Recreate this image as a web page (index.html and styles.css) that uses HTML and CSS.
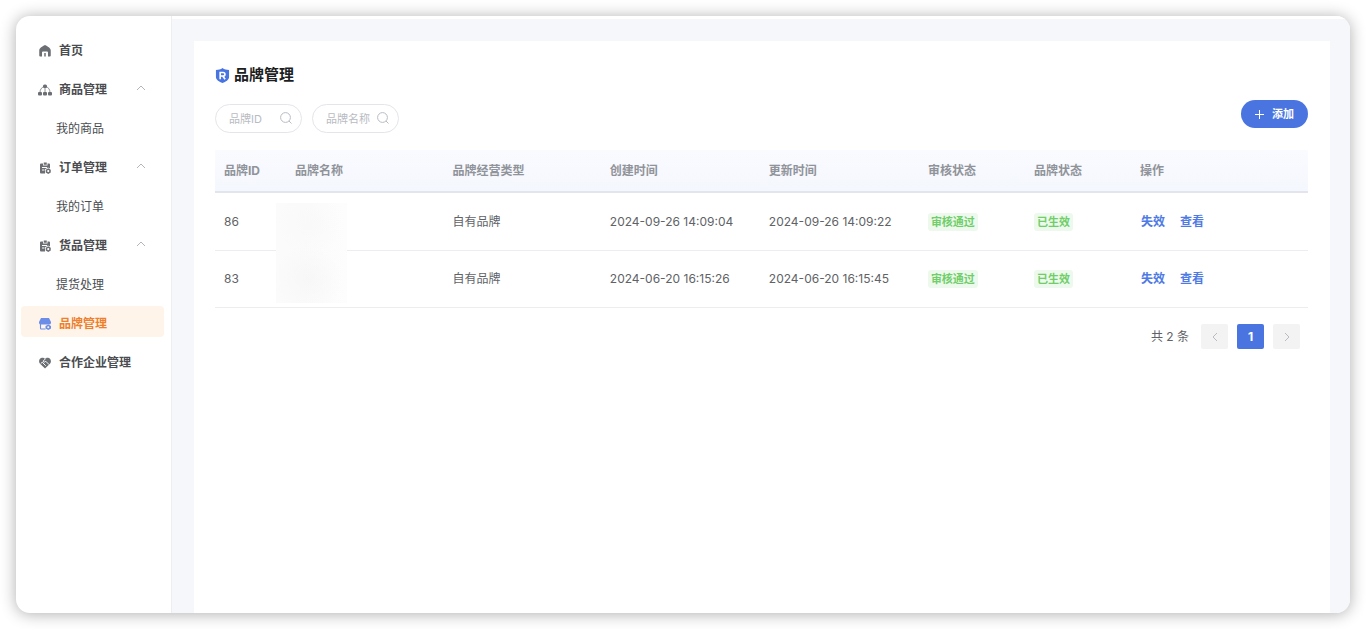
FILE: index.html
```html
<!DOCTYPE html>
<html lang="zh-CN">
<head>
<meta charset="utf-8">
<meta name="viewport" content="width=device-width, initial-scale=1">
<title>品牌管理</title>
<link rel="stylesheet" href="styles.css">
</head>
<body>
<svg class="sprite" aria-hidden="true">
  <symbol id="order" viewBox="0 0 24 24">
    <path fill="currentColor" fill-rule="evenodd" d="M4 3h4v4h9V3h3a2 2 0 0 1 2 2v8l-4-2-6 3.500V23H4a2 2 0 0 1-2-2V5a2 2 0 0 1 2-2zM6 10h10v1.800H6zM6 15h5v1.800H6z"/>
    <path fill="currentColor" d="M9.500 1h6v4.500h-6z"/>
    <path fill="currentColor" fill-rule="evenodd" d="M18.500 12.500l5 2.900v5.700l-5 2.900-5-2.900v-5.700zM18.500 16a2.200 2.200 0 1 0 0 4.400 2.200 2.200 0 0 0 0-4.400z"/>
  </symbol>
  <symbol id="chevron" viewBox="0 0 10 6">
    <path fill="none" stroke="currentColor" d="M1 5l4-4 4 4"/>
  </symbol>
  <symbol id="search" viewBox="0 0 12 12">
    <circle cx="5.500" cy="5.500" r="4.900" fill="none" stroke="currentColor"/>
    <path fill="none" stroke="currentColor" d="M9 9l2.500 2.500"/>
  </symbol>
</svg>
<div class="window">
  <nav class="sidebar">
    <a class="item" href="#">
      <svg class="icon" viewBox="0 0 24 24"><path fill="currentColor" d="M12 0c5 2.500 11.500 6 11.500 11v10a2 2 0 0 1-2 2H18v-8a2 2 0 0 0-2-2H8a2 2 0 0 0-2 2v8H2.500a2 2 0 0 1-2-2V11C.500 6 7 2.500 12 0z"/><path fill="currentColor" d="M10.500 16h3v7h-3z"/></svg>
      首页
    </a>
    <a class="item" href="#">
      <svg class="icon wide" viewBox="0 0 28 24"><path fill="none" stroke="currentColor" stroke-width="1.500" d="M14 5v13M4 17c0-6 3-11 10-12 7 1 10 6 10 12"/><rect x="10" y="1" width="8" height="7" rx="3" fill="currentColor"/><g fill="currentColor"><rect y="16" width="8" height="7" rx="2"/><rect x="10" y="16" width="8" height="7" rx="2"/><rect x="20" y="16" width="8" height="7" rx="2"/></g></svg>
      商品管理
      <svg class="chevron"><use href="#chevron"/></svg>
    </a>
    <a class="item child" href="#">我的商品</a>
    <a class="item" href="#">
      <svg class="icon"><use href="#order"/></svg>
      订单管理
      <svg class="chevron"><use href="#chevron"/></svg>
    </a>
    <a class="item child" href="#">我的订单</a>
    <a class="item" href="#">
      <svg class="icon"><use href="#order"/></svg>
      货品管理
      <svg class="chevron"><use href="#chevron"/></svg>
    </a>
    <a class="item child" href="#">提货处理</a>
    <a class="item active" href="#" aria-current="page">
      <svg class="icon" viewBox="0 0 24 24"><path fill="currentColor" d="M4 0h16l4 8v2a3.900 3.900 0 0 1-4 3H4a3.900 3.900 0 0 1-4-3V8z"/><path fill="none" stroke="currentColor" stroke-width="2.200" d="M3 12v8.500a1.500 1.500 0 0 0 1.500 1.500H13"/><path fill="currentColor" fill-rule="evenodd" d="M18.500 13l5.500 3v5l-5.500 3-5.500-3v-5zM18.500 16.500a2 2 0 1 0 0 4 2 2 0 0 0 0-4z"/></svg>
      品牌管理
    </a>
    <a class="item" href="#">
      <svg class="icon" viewBox="0 0 24 24"><path fill="currentColor" d="M12 23L2 13.500C-1.500 9.500 0 3 5.500 1.500 8 1 10.500 2 12 3.500c1.500-1.500 4-2.500 6.500-2 5.500 1.500 7 8 3.500 12z"/><path fill="none" stroke="#fff" stroke-width="1.900" d="M13 3.500L8.500 8c0 3 3 3 5 .500l7 7M3.500 13l3-2.500 7 7"/></svg>
      合作企业管理
    </a>
  </nav>
  <main class="main">
    <section class="panel">
      <h1 class="title">
        <svg class="shield" viewBox="0 0 14 16"><path fill="#4874e2" d="M7 0c2 1.600 4.300 2 7 2v7.500c0 3-3.500 5.200-7 6.500-3.500-1.300-7-3.500-7-6.500V2c2.700 0 5-.400 7-2z"/><path fill="none" stroke="#fff" stroke-width="1.700" d="M4.500 12V4.800h3.200a1.900 1.900 0 0 1 0 3.800H4.500M7.200 8.600L9.800 12"/></svg>
        品牌管理
      </h1>
      <div class="toolbar">
        <form class="filters">
          <label class="search"><input class="search-input" type="text" placeholder="品牌ID" aria-label="品牌ID"><svg class="search-icon"><use href="#search"/></svg></label>
          <label class="search"><input class="search-input" type="text" placeholder="品牌名称" aria-label="品牌名称"><svg class="search-icon"><use href="#search"/></svg></label>
        </form>
        <button class="add" type="button">
          <svg class="plus" viewBox="0 0 9 9"><path stroke="currentColor" d="M4.500 0v9M0 4.500h9"/></svg>
          添加
        </button>
      </div>
      <div class="table-wrap">
        <table class="table">
          <colgroup>
            <col class="col-id"><col class="col-text"><col class="col-text"><col class="col-time"><col class="col-time"><col class="col-state"><col class="col-state"><col>
          </colgroup>
          <thead>
            <tr><th>品牌ID</th><th>品牌名称</th><th>品牌经营类型</th><th>创建时间</th><th>更新时间</th><th>审核状态</th><th>品牌状态</th><th>操作</th></tr>
          </thead>
          <tbody>
            <tr><td>86</td><td></td><td>自有品牌</td><td>2024-09-26 14:09:04</td><td>2024-09-26 14:09:22</td><td><span class="tag">审核通过</span></td><td><span class="tag">已生效</span></td><td><div class="actions"><a class="link" href="#">失效</a><a class="link" href="#">查看</a></div></td></tr>
            <tr><td>83</td><td></td><td>自有品牌</td><td>2024-06-20 16:15:26</td><td>2024-06-20 16:15:45</td><td><span class="tag">审核通过</span></td><td><span class="tag">已生效</span></td><td><div class="actions"><a class="link" href="#">失效</a><a class="link" href="#">查看</a></div></td></tr>
          </tbody>
        </table>
        <div class="mask"></div>
      </div>
      <div class="pagination">
        <span class="total">共 2 条</span>
        <button class="page" type="button" aria-label="上一页" disabled><svg class="arrow" viewBox="0 0 6 10"><path fill="none" stroke="currentColor" d="M5 1L1 5l4 4"/></svg></button>
        <button class="page current" type="button">1</button>
        <button class="page" type="button" aria-label="下一页" disabled><svg class="arrow" viewBox="0 0 6 10"><path fill="none" stroke="currentColor" d="M1 1l4 4-4 4"/></svg></button>
      </div>
    </section>
  </main>
</div>
</body>
</html>
```

FILE: styles.css
```css
* {
  box-sizing: border-box;
}

body {
  margin: 0;
  padding: 16px;
  min-height: 100vh;
  display: flex;
  background: #fff;
  color: #606266;
  font-family: Inter, "Noto Sans CJK SC", sans-serif;
  font-size: 12px;
  line-height: 18px;
}

button,
input {
  font: inherit;
}

a {
  text-decoration: none;
}

.sprite {
  position: absolute;
  width: 0;
  height: 0;
}

.window {
  flex: 1;
  display: flex;
  overflow: hidden;
  border-radius: 14px;
  background: #fff;
  box-shadow: 0 1px 16px rgba(0, 0, 0, 0.32);
}

.sidebar {
  flex: 0 0 156px;
  display: flex;
  flex-direction: column;
  gap: 8px;
  padding: 17px 7px 17px 5px;
  border-right: 1px solid #eceef2;
}

.item {
  display: flex;
  align-items: center;
  height: 31px;
  padding: 4px 18px 0;
  gap: 8px;
  border-radius: 4px;
  color: #4a4c50;
  font-weight: 700;
  white-space: nowrap;
}

.child {
  padding-left: 35px;
  font-weight: 400;
}

.active {
  background: #fef4ea;
  color: #ee7f2d;
}

.icon {
  flex: none;
  width: 12px;
  height: 12px;
  color: #6b6e72;
}

.wide {
  width: 14px;
  margin: 0 -1px;
}

.active .icon {
  color: #6b8de8;
}

.chevron {
  width: 10px;
  height: 6px;
  margin: 0 0 4px auto;
  color: #b2b5ba;
}

.main {
  flex: 1;
  display: flex;
  min-width: 0;
  padding: 22px 20px 0 22px;
  border-top: 3px solid #fff;
  background: #f5f7fb;
}

.panel {
  flex: 1;
  min-width: 0;
  padding: 22px 22px 22px 21px;
  background: #fff;
}

.title {
  display: flex;
  align-items: center;
  gap: 4px;
  margin: 0 0 13px;
  color: #1c1e22;
  font-size: 15px;
  font-weight: 700;
  line-height: 24px;
}

.shield {
  width: 15px;
  height: 15px;
}

.toolbar {
  display: flex;
  align-items: flex-start;
  justify-content: space-between;
  margin-bottom: 17px;
}

.filters {
  display: flex;
  gap: 10px;
  padding-top: 4px;
}

.search {
  display: flex;
  align-items: center;
  width: 87px;
  height: 29px;
  padding: 0 9px 0 13px;
  border: 1px solid #e3e5ea;
  border-radius: 15px;
}

.search-input {
  flex: 1;
  min-width: 0;
  padding: 0;
  border: 0;
  outline: 0;
  background: none;
  font-size: 11px;
}

.search-input::placeholder {
  color: #b8bbc2;
  opacity: 1;
}

.search-icon {
  flex: none;
  width: 12px;
  height: 12px;
  margin-bottom: 2px;
  color: #b8bbc2;
}

.add {
  display: flex;
  align-items: center;
  gap: 8px;
  height: 28px;
  padding: 0 14px;
  border: 0;
  border-radius: 14px;
  background: #4a75e0;
  color: #fff;
  font-size: 11px;
  font-weight: 700;
}

.plus {
  width: 9px;
  height: 9px;
}

.table-wrap {
  position: relative;
}

.table {
  width: 100%;
  border-collapse: separate;
  border-spacing: 0;
  table-layout: fixed;
}

.col-id {
  width: 6.5%;
}

.col-text {
  width: 14.4%;
}

.col-time {
  width: 14.55%;
}

.col-state {
  width: 9.7%;
}

.table th {
  height: 43px;
  padding: 0 9px;
  border-bottom: 2px solid #e2e5ec;
  background: linear-gradient(#fafbff, #f4f7fd);
  color: #909399;
  font-weight: 700;
  text-align: left;
}

.table td {
  height: 58px;
  padding: 0 9px;
  border-bottom: 1px solid #ebedf0;
  white-space: nowrap;
}

.table tr:last-child td {
  height: 57px;
}

.tag {
  display: inline-block;
  padding: 0 3px;
  border-radius: 3px;
  background: #eef9ed;
  color: #6fce69;
  font-size: 11px;
  font-weight: 700;
  vertical-align: middle;
}

.actions {
  display: flex;
  gap: 15px;
  padding-left: 1px;
}

.link {
  color: #4f7ae4;
  font-weight: 700;
}

.mask {
  position: absolute;
  top: 53px;
  left: 61px;
  width: 71px;
  height: 100px;
  background:
    radial-gradient(circle at 32px 20px, #f9f9f9, transparent 34px),
    radial-gradient(circle at 32px 76px, #f7f7f7, transparent 34px),
    linear-gradient(90deg, #fbfbfb 40%, #fdfdfd);
}

.pagination {
  display: flex;
  align-items: center;
  justify-content: flex-end;
  gap: 9px;
  padding: 16px 8px 0;
}

.total {
  margin-right: 3px;
}

.page {
  display: grid;
  place-items: center;
  width: 27px;
  height: 25px;
  padding: 0;
  border: 0;
  border-radius: 2px;
  background: #f3f3f4;
  color: #b9bbc0;
  font-weight: 700;
}

.current {
  background: #4a75e0;
  color: #fff;
}

.arrow {
  width: 6px;
  height: 10px;
}
```
